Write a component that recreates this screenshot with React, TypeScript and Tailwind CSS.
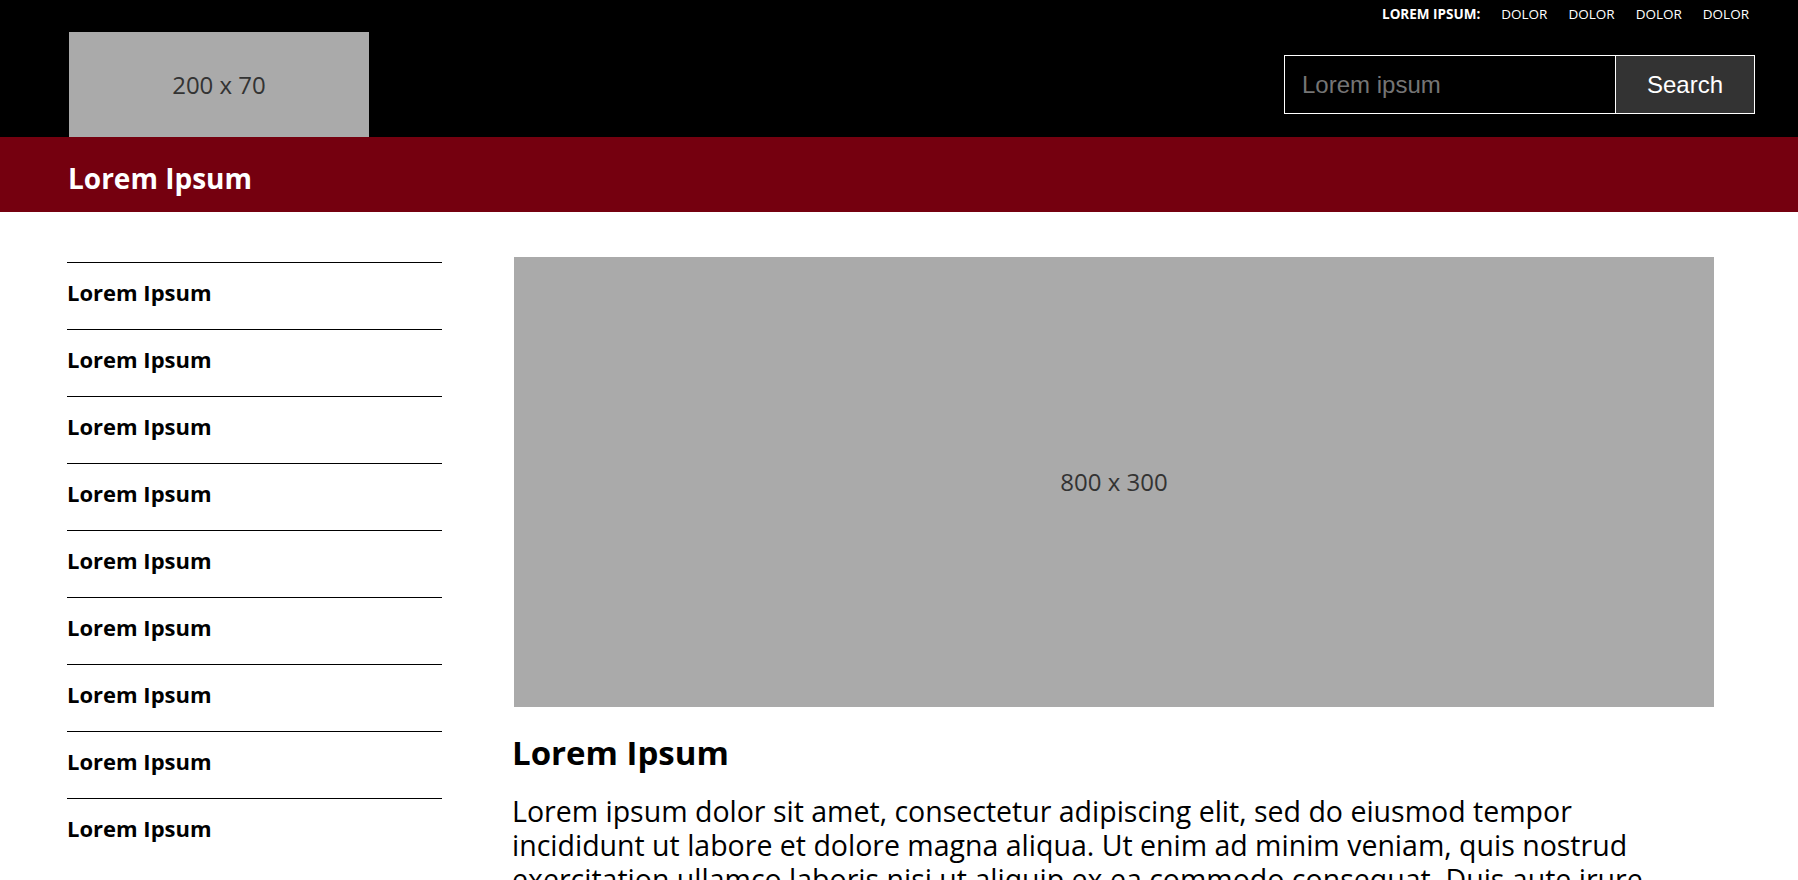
import React from "react"

const sideItems = Array.from({ length: 9 }, () => "Lorem Ipsum")

function Header() {
  return (
    <header className="bg-black h-[137px] pl-[69px] pr-[43px] flex flex-col">
      <div className="h-[32px] flex justify-end items-start pt-[5px] pr-[6px]">
        <ul className="flex gap-[21px] text-[13.5px] text-white uppercase leading-[18px]">
          <li className="font-bold">Lorem Ipsum:</li>
          <li>Dolor</li>
          <li>Dolor</li>
          <li>Dolor</li>
          <li>Dolor</li>
        </ul>
      </div>
      <div className="flex justify-between items-start">
        <div className="w-[300px] h-[105px] bg-[#aaaaaa] flex items-center justify-center text-[24px] text-[#333]">
          200 x 70
        </div>
        <form className="mt-[23px] flex font-['Liberation_Sans',Arial,sans-serif]">
          <input
            className="w-[332px] h-[59px] bg-black border border-white px-[17px] text-[24px] text-white placeholder:text-[#757575] outline-none"
            placeholder="Lorem ipsum"
          />
          <button
            type="button"
            className="w-[139px] h-[59px] bg-[#333333] border border-white border-l-0 text-white text-[24px]"
          >
            Search
          </button>
        </form>
      </div>
    </header>
  )
}

export default function App() {
  return (
    <div className="min-h-screen bg-white font-['Open_Sans',sans-serif] text-black">
      <Header />
      <div className="bg-[#75000f] h-[75px] pl-[68px] pt-[6px] flex items-center">
        <h1 className="text-white font-bold text-[28px]">Lorem Ipsum</h1>
      </div>
      <div className="flex pl-[67px]">
        <aside className="w-[375px] mt-[50px] shrink-0">
          <ul>
            {sideItems.map((label, i) => (
              <li key={i} className="border-t border-black h-[67px] pb-[8px] flex items-center text-[22px] font-bold">
                {label}
              </li>
            ))}
          </ul>
        </aside>
        <main className="ml-[72px] w-[1200px] mt-[45px]">
          <div className="h-[450px] bg-[#aaaaaa] flex items-center justify-center text-[24px] text-[#333]">
            800 x 300
          </div>
          <h2 className="-ml-[2px] mt-[22px] text-[33px] font-bold leading-[48px]">Lorem Ipsum</h2>
          <p className="-ml-[2px] mt-[17px] max-w-[1160px] text-[28.5px] leading-[34px]">
            Lorem ipsum dolor sit amet, consectetur adipiscing elit, sed do eiusmod tempor incididunt ut labore et
            dolore magna aliqua. Ut enim ad minim veniam, quis nostrud exercitation ullamco laboris nisi ut aliquip ex
            ea commodo consequat. Duis aute irure dolor in reprehenderit in voluptate velit esse cillum dolore eu
            fugiat nulla pariatur.
          </p>
        </main>
      </div>
    </div>
  )
}
